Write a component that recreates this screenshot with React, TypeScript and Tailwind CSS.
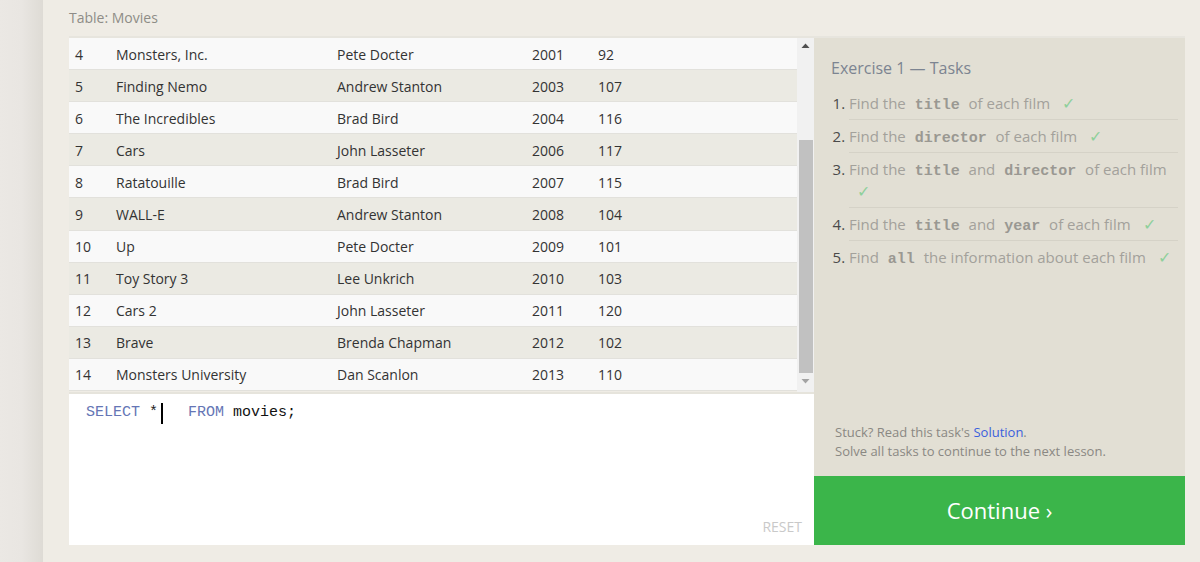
import React from "react";

const rows = [
  [4, "Monsters, Inc.", "Pete Docter", 2001, 92],
  [5, "Finding Nemo", "Andrew Stanton", 2003, 107],
  [6, "The Incredibles", "Brad Bird", 2004, 116],
  [7, "Cars", "John Lasseter", 2006, 117],
  [8, "Ratatouille", "Brad Bird", 2007, 115],
  [9, "WALL-E", "Andrew Stanton", 2008, 104],
  [10, "Up", "Pete Docter", 2009, 101],
  [11, "Toy Story 3", "Lee Unkrich", 2010, 103],
  [12, "Cars 2", "John Lasseter", 2011, 120],
  [13, "Brave", "Brenda Chapman", 2012, 102],
  [14, "Monsters University", "Dan Scanlon", 2013, 110],
];

const Code = ({ children }: { children: React.ReactNode }) => (
  <code className="px-[5px] font-bold text-[15px] leading-none text-[#9a9892] [font-family:'Liberation_Mono',monospace]">
    {children}
  </code>
);

const Check = () => <span className="ml-[8px] inline-block text-[16px] leading-none text-[#8fd09b]">✓</span>;

export default function App() {
  return (
    <div className="flex h-[562px] w-[1200px] overflow-hidden bg-[#efece5] [font-family:'Open_Sans',sans-serif]">
      <div className="w-[43px] shrink-0 bg-gradient-to-r from-[#ebe8e4] via-[#e9e6e2] to-[#dedbd5]" />
      <div className="flex flex-1 flex-col pl-[26px] pr-[15px]">
        <div className="pt-[8px] text-[14px] leading-[20px] text-[#8e8c87]">Table: Movies</div>
        <div className="mt-[8px] flex h-[509px] border-t-2 border-[#e7e5de]">
          {/* left */}
          <div className="flex w-[745px] flex-col">
            <div className="flex h-[356px] border-b-2 border-[#e6e4dc]">
              <div className="flex flex-1 flex-col">
                {rows.map((r, i) => (
                  <div
                    key={i}
                    className={`flex h-[32.1px] shrink-0 items-center border-b border-[#e2e1dc] pt-[1px] text-[14px] text-[#333333] ${
                      i % 2 === 0 ? "bg-[#f9f9f9]" : "bg-[#ebeae3]"
                    }`}
                  >
                    <div className="w-[47px] pl-[6px]">{r[0]}</div>
                    <div className="w-[221px]">{r[1]}</div>
                    <div className="w-[195px]">{r[2]}</div>
                    <div className="w-[66px]">{r[3]}</div>
                    <div className="flex-1">{r[4]}</div>
                  </div>
                ))}
              </div>
              <div className="flex w-[17px] flex-col items-center bg-[#f1f1f1]">
                <svg width="9" height="6" viewBox="0 0 9 6" className="mt-[5px]">
                  <polygon points="4.5,0.5 8.5,5 0.5,5" fill="#505050" />
                </svg>
                <div className="mt-[91px] h-[233px] w-[14px] bg-[#c1c1c1]" />
                <svg width="9" height="6" viewBox="0 0 9 6" className="mt-[5px]">
                  <polygon points="0.5,1 8.5,1 4.5,5.5" fill="#a3a3a3" />
                </svg>
              </div>
            </div>
            <div className="flex flex-1 flex-col bg-white pl-[17px] pr-[12px] pb-[8px] pt-[8px]">
              <div className="flex items-center text-[15px] leading-[22px] [font-family:'Liberation_Mono',monospace]">
                <span className="whitespace-pre text-[#6575b5]">SELECT </span>
                <span className="text-[#222]">*</span>
                <span className="ml-[3px] mr-[-2px] inline-block h-[21px] w-[2px] bg-black" />
                <span className="whitespace-pre text-[#6575b5]">   FROM</span>
                <span className="whitespace-pre text-[#111]"> movies;</span>
              </div>
              <div className="mt-auto self-end text-[14px] text-[#c9c9c9]">RESET</div>
            </div>
          </div>
          {/* right */}
          <div className="flex w-[371px] flex-col bg-[#e2dfd4]">
            <div className="flex flex-1 flex-col">
              <div className="pl-[17px] pt-[18px] text-[16px] leading-[24px] text-[#7c8491]">Exercise 1 — Tasks</div>
              <ol className="mt-[7px] list-decimal pl-[35px] pr-[7px] text-[15px] leading-[22px] text-[#a3a19b] marker:text-[#4a4a4a]">
                <li className="border-b border-[#d5d2c7] pb-[5px] pt-[5px]">
                  Find the <Code>title</Code> of each film <Check />
                </li>
                <li className="border-b border-[#d5d2c7] pb-[5px] pt-[5px]">
                  Find the <Code>director</Code> of each film <Check />
                </li>
                <li className="border-b border-[#d5d2c7] pb-[5px] pt-[5px]">
                  Find the <Code>title</Code> and <Code>director</Code> of each film <Check />
                </li>
                <li className="border-b border-[#d5d2c7] pb-[5px] pt-[5px]">
                  Find the <Code>title</Code> and <Code>year</Code> of each film <Check />
                </li>
                <li className="pb-[5px] pt-[5px]">
                  Find <Code>all</Code> the information about each film <Check />
                </li>
              </ol>
              <div className="mt-auto pb-[15px] pl-[21px] text-[13px] leading-[19px] text-[#8a8883]">
                <div>
                  Stuck? Read this task's <span className="text-[#3a60dd]">Solution</span>.
                </div>
                <div>Solve all tasks to continue to the next lesson.</div>
              </div>
            </div>
            <div className="flex h-[69px] items-center justify-center bg-[#3bb54a] text-[22px] text-white">
              Continue ›
            </div>
          </div>
        </div>
      </div>
    </div>
  );
}
